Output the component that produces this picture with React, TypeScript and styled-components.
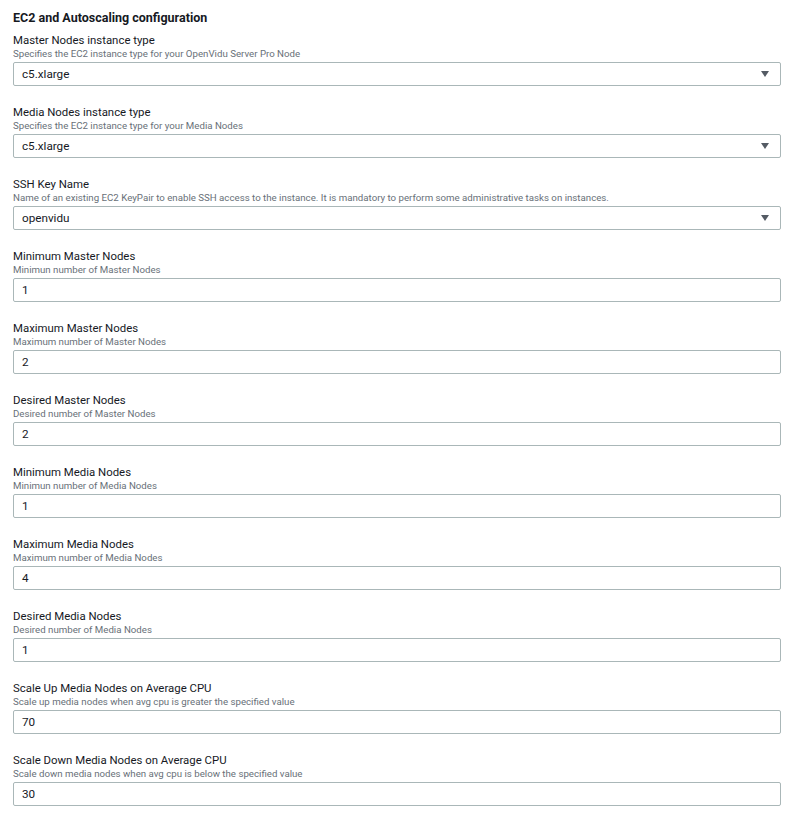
import React from "react";
import styled, { createGlobalStyle } from "styled-components";

const Global = createGlobalStyle`
  html, body { margin: 0; padding: 0; background: #ffffff; }
  body { font-family: Roboto, "Liberation Sans", sans-serif; color: #16191f; }
`;

const Page = styled.div`
  padding: 10px 10px 0 13px;
  width: 791px;
  box-sizing: border-box;
`;

const Title = styled.h2`
  margin: 0 0 4px 0;
  font-size: 12.5px;
  line-height: 16px;
  font-weight: 700;
  color: #16191f;
`;

const Field = styled.div`
  display: flex;
  flex-direction: column;
  margin-bottom: 16px;
  width: 768px;
`;

const Label = styled.label`
  font-size: 11.4px;
  line-height: 16px;
  padding-top: 2px;
  margin-bottom: -1px;
  color: #16191f;
`;

const Description = styled.div`
  font-size: 9.7px;
  line-height: 13px;
  color: #687078;
  margin-bottom: 2px;
`;

const Box = styled.div<{ $select?: boolean }>`
  position: relative;
  height: 24px;
  box-sizing: border-box;
  border: 1px solid #aab7b8;
  border-radius: 2px;
  background: #ffffff;
  display: flex;
  align-items: center;
  padding: 0 ${(p) => (p.$select ? "30px" : "8px")} 0 8px;
  font-size: 11.7px;
  color: #16191f;
`;

const Caret = styled.span`
  position: absolute;
  right: 11px;
  top: 50%;
  margin-top: -3px;
  width: 0;
  height: 0;
  border-left: 4.5px solid transparent;
  border-right: 4.5px solid transparent;
  border-top: 6px solid #545b64;
`;

type F = { label: string; desc: string; value: string; select?: boolean };

const fields: F[] = [
  { label: "Master Nodes instance type", desc: "Specifies the EC2 instance type for your OpenVidu Server Pro Node", value: "c5.xlarge", select: true },
  { label: "Media Nodes instance type", desc: "Specifies the EC2 instance type for your Media Nodes", value: "c5.xlarge", select: true },
  { label: "SSH Key Name", desc: "Name of an existing EC2 KeyPair to enable SSH access to the instance. It is mandatory to perform some administrative tasks on instances.", value: "openvidu", select: true },
  { label: "Minimum Master Nodes", desc: "Minimun number of Master Nodes", value: "1" },
  { label: "Maximum Master Nodes", desc: "Maximum number of Master Nodes", value: "2" },
  { label: "Desired Master Nodes", desc: "Desired number of Master Nodes", value: "2" },
  { label: "Minimum Media Nodes", desc: "Minimun number of Media Nodes", value: "1" },
  { label: "Maximum Media Nodes", desc: "Maximum number of Media Nodes", value: "4" },
  { label: "Desired Media Nodes", desc: "Desired number of Media Nodes", value: "1" },
  { label: "Scale Up Media Nodes on Average CPU", desc: "Scale up media nodes when avg cpu is greater the specified value", value: "70" },
  { label: "Scale Down Media Nodes on Average CPU", desc: "Scale down media nodes when avg cpu is below the specified value", value: "30" },
];

export default function App() {
  return (
    <>
      <Global />
      <Page>
        <Title>EC2 and Autoscaling configuration</Title>
        {fields.map((f) => (
          <Field key={f.label}>
            <Label>{f.label}</Label>
            <Description>{f.desc}</Description>
            <Box $select={f.select}>
              {f.value}
              {f.select && <Caret />}
            </Box>
          </Field>
        ))}
      </Page>
    </>
  );
}
